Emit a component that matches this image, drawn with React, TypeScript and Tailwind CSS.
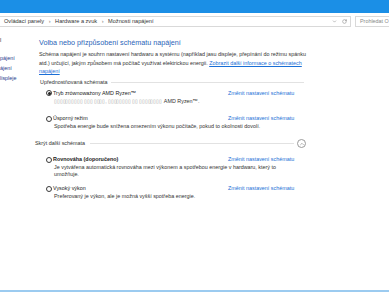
import { ChevronDown, RotateCw, ChevronUp } from "lucide-react";

const LINK = "text-[#1a6fd6]";

function Radio({ checked }: { checked?: boolean }) {
  return (
    <span className="flex h-[6px] w-[6px] shrink-0 items-center justify-center rounded-full border-[0.8px] border-[#3a3a3a] bg-white">
      {checked && <span className="h-[3px] w-[3px] rounded-full bg-[#222]" />}
    </span>
  );
}

function PlanRow({ label, checked, bold }: { label: string; checked?: boolean; bold?: boolean }) {
  return (
    <div className="flex h-[8px] items-center">
      <div className="flex w-[189px] items-center gap-[1px] pl-[7px]">
        <Radio checked={checked} />
        <span className={bold ? "font-bold text-[#222]" : "text-[#222]"}>{label}</span>
      </div>
      <span className={LINK}>Změnit nastavení schématu</span>
    </div>
  );
}

function Desc({ lines }: { lines: React.ReactNode[] }) {
  return (
    <div className="pl-[15px] leading-[7.5px] text-[#333]">
      {lines.map((l, i) => (
        <div key={i} className="h-[7.5px] whitespace-nowrap">
          {l}
        </div>
      ))}
    </div>
  );
}

export default function App() {
  return (
    <div className="relative h-[292px] w-[389px] overflow-hidden bg-white font-['Liberation_Sans',Arial,sans-serif] text-[5.4px] text-[#222]">
      {/* title bar */}
      <div className="h-[13px] bg-[#1b8fe6]" />

      {/* address row */}
      <div className="flex h-[16px] items-center gap-[4px] pr-0">
        <div className="flex h-[11px] w-[351px] items-center border border-l-0 border-[#d9d9d9] pl-[4px]">
          <span className="flex-1 whitespace-nowrap text-[5.6px] text-[#333]">
            Ovládací panely <span className="mx-[3px] text-[#777]">›</span> Hardware a zvuk{" "}
            <span className="mx-[3px] text-[#777]">›</span> Možnosti napájení
          </span>
          <ChevronDown className="mr-[5px] h-[5px] w-[5px] text-[#666]" strokeWidth={2} />
          <RotateCw className="mr-[3px] h-[5px] w-[5px] text-[#666]" strokeWidth={2} />
        </div>
        <div className="flex h-[11px] flex-1 items-center border border-r-0 border-[#d9d9d9] pl-[4px] text-[5.4px] text-[#888] whitespace-nowrap">
          Prohledat O
        </div>
      </div>

      <div className="flex">
        {/* left pane */}
        <div className="w-[39px] overflow-hidden pt-[7px] text-[#1e3a8c] whitespace-nowrap">
          <div className="h-[8px] leading-[8px] text-[#222]">l</div>
          <div className="mt-[9px] h-[10px] leading-[10px]">pájení</div>
          <div className="h-[10px] leading-[10px]">ájení</div>
          <div className="h-[10px] leading-[10px]">lispleje</div>
        </div>

        {/* main */}
        <div className="w-[267px] pt-[9px]">
          <div className="h-[10px] whitespace-nowrap text-[7.2px] leading-[10px] text-[#2a64b8]">
            Volba nebo přizpůsobení schématu napájení
          </div>
          <div className="mt-[2px] leading-[8.5px] text-[#333]">
            <div className="whitespace-nowrap">
              Schéma napájení je souhrn nastavení hardwaru a systému (například jasu displeje, přepínání do režimu spánku
            </div>
            <div className="whitespace-nowrap">
              atd.) určující, jakým způsobem má počítač využívat elektrickou energii.{" "}
              <span className={`${LINK} underline`}>Zobrazit další informace o schématech</span>
            </div>
            <div className={`${LINK} underline`}>napájení</div>
          </div>

          {/* preferred */}
          <div className="mt-[2.5px] flex h-[9px] items-center pl-[1px]">
            <span className="whitespace-nowrap text-[#333]">Upřednostňovaná schémata</span>
            <span className="ml-[4px] mr-[2px] h-px flex-1 bg-[#e2e2e2]" />
          </div>

          <div className="mt-[2px]">
            <PlanRow label="Tryb zrównoważony AMD Ryzen™" checked />
            <div className="flex h-[8px] items-center pl-[15px] whitespace-nowrap text-[#333]">
              <span className="text-[#9a9a9a] tracking-[-0.15px]">
                ▯▯▯▯▯▯▯▯▯▯ ▯▯▯ ▯▯▯▯, ▯▯▯▯▯▯▯▯ ▯▯ ▯▯▯▯▯▯▯▯
              </span>
              <span className="ml-[2px]">AMD Ryzen™.</span>
            </div>
          </div>

          <div className="mt-[9.5px]">
            <PlanRow label="Úsporný režim" />
            <Desc lines={["Spotřeba energie bude snížena omezením výkonu počítače, pokud to okolnosti dovolí."]} />
          </div>

          {/* additional */}
          <div className="mt-[9.5px] flex h-[8px] items-center -ml-[4px]">
            <span className="whitespace-nowrap text-[#333]">Skrýt další schémata</span>
            <span className="ml-[5px] h-px flex-1 bg-[#e2e2e2]" />
            <span className="ml-[3px] flex h-[9px] w-[9px] items-center justify-center rounded-full border-[0.8px] border-[#9a9a9a]">
              <ChevronUp className="h-[6px] w-[6px] text-[#777]" strokeWidth={2} />
            </span>
          </div>

          <div className="mt-[8px]">
            <PlanRow label="Rovnováha (doporučeno)" bold />
            <Desc
              lines={[
                "Je vytvářena automatická rovnováha mezi výkonem a spotřebou energie v hardwaru, který to",
                "umožňuje.",
              ]}
            />
          </div>

          <div className="mt-[6px]">
            <PlanRow label="Vysoký výkon" />
            <Desc lines={["Preferovaný je výkon, ale je možná vyšší spotřeba energie."]} />
          </div>
        </div>
      </div>

      {/* bottom edge */}
      <div className="absolute bottom-0 left-0 h-[2px] w-full bg-[#9ccbf0]" />
    </div>
  );
}
